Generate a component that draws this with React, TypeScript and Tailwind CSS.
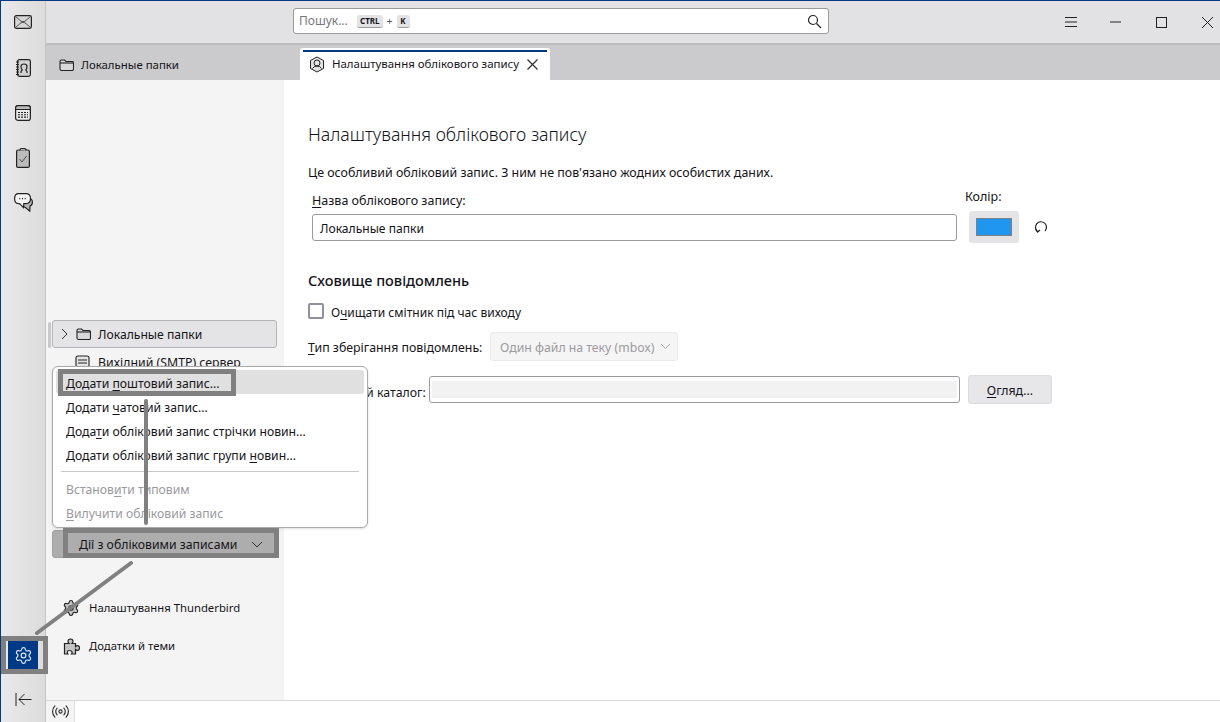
import React from 'react';
import { Settings, Radio } from 'lucide-react';

const Mail = () => (
  <svg width="18" height="14" viewBox="0 0 18 14" fill="#d6d6d6" stroke="#222" strokeWidth="1.2">
    <rect x=".6" y=".6" width="16.800" height="12.800" rx="1.800" />
    <path d="M1.500 1.500l5.500 4.700q2 1 4 0l5.500-4.700M1.500 12.500L7 7.800q2-1 4 0l5.500 4.700" fill="none" strokeWidth=".9" stroke="#444" />
  </svg>
);

const Book = () => (
  <svg width="15" height="18" viewBox="0 0 15 18" fill="#d2d2d2" stroke="#222" strokeWidth="1.200">
    <rect x="1.600" y=".6" width="12.800" height="16.800" rx="1.800" />
    <path d="M0 3h3M0 5.500h3M0 8h3M0 10.500h3M0 13h3M0 15.500h3" strokeWidth="1" />
    <path d="M5 14v-1.500l1.200-1.500Q5 9.500 5 7.500 5 5 8 5t3 2.500q0 2-1.200 3.500l1.200 1.500V14" fill="none" />
  </svg>
);

const Calendar = () => (
  <svg width="16" height="16" viewBox="0 0 16 16" fill="#e9e9e9" stroke="#222" strokeWidth="1.200">
    <rect x=".6" y=".6" width="14.800" height="14.800" rx="2.500" />
    <path d="M.6 4.500V3q0-2.400 2.400-2.400h10q2.400 0 2.400 2.400v1.500z" fill="#bdbdbd" />
    <path d="M3 7.500h10M3 9.800h10M3 12.100h10" strokeDasharray="2 1" strokeWidth="1.100" />
  </svg>
);

const Tasks = () => (
  <svg width="14" height="20" viewBox="0 0 14 20" fill="#bcbcbc" stroke="#222" strokeWidth="1.200">
    <rect x=".6" y="2" width="12.800" height="17.400" rx="1.500" />
    <path d="M4 2.200Q4 .6 5.500 .6h3Q10 .6 10 2.200" fill="#e4e4e4" />
    <path d="M3.500 11l2.500 3 4.500-6" fill="none" strokeWidth=".9" stroke="#444" />
  </svg>
);

const Chat = () => (
  <svg width="19" height="19" viewBox="0 0 19 19" fill="none" stroke="#222" strokeWidth="1.200">
    <path d="M15 5q3.400 .8 3.400 4.200 0 3-2.400 3.800l-.2 5.200-4.300-3.700-2.500-1" fill="#b8b8b8" />
    <path d="M4.500.6h7.500q4.500 0 4.500 5t-4.500 5H9.800l-.3 4-4-4h-1Q.6 10.600.6 5.600T4.500.6z" fill="#f4f4f4" />
    <path d="M5.300 5.600h1M8 5.600h1M10.700 5.600h1" />
  </svg>
);

const Folder = () => (
  <svg width="15" height="12" viewBox="0 0 15 12" fill="#d8d8da" stroke="#222" strokeWidth="1.100">
    <path d="M1 2.500q0-1.500 1.500-1.500h3l1.500 1.500h6q1.500 0 1.500 1.500v6q0 1.500-1.500 1.500h-10Q1 11.500 1 10z" />
    <path d="M1 4h13" />
  </svg>
);

const AddonPiece = () => (
  <svg width="17" height="17" viewBox="0 0 17 17" fill="#c4c4c4" stroke="#222" strokeWidth="1.200">
    <path d="M1.500 5.500H6Q5 4.500 5 3.300 5 1 7.500 1T10 3.300q0 1.200-1 2.200h3.500v3q.8-.8 2-.8 2 0 2 2.300t-2 2.300q-1.200 0-2-.8V16H8.500q.8-1 .5-2-.5-1.500-2.500-1.500T4.300 14q-.1 1 .7 2H1.500z" />
  </svg>
);

const Mnemonic = ({ children }: { children: React.ReactNode }) => (
  <span className="underline underline-offset-2 decoration-1">{children}</span>
);

const rail = [
  { Icon: Mail, h: 'h-[44px]' },
  { Icon: Book, h: 'h-[46px]' },
  { Icon: Calendar, h: 'h-[43px]' },
  { Icon: Tasks, h: 'h-[45px]' },
  { Icon: Chat, h: 'h-[45px]' },
];

const menuClass = 'h-6 pl-[10px] pt-[4px] flex items-center text-[12.200px] whitespace-pre';

export default function App() {
  return (
    <div className="relative h-[722px] w-[1220px] overflow-hidden flex bg-white border-t border-l border-[#003a87] text-[12.400px] text-[#15141a] [font-family:'Noto_Sans',sans-serif]">
      {/* Spaces toolbar */}
      <aside className="w-[45px] shrink-0 flex flex-col items-center bg-gradient-to-r from-[#e9e9e9] to-[#dcdcdc] border-r border-[#c4c4c4]">
        <div className="pt-[14px] flex flex-col items-center w-full">
          {rail.map(({ Icon, h }, i) => (
            <div key={i} className={`${h} w-full flex items-start justify-center`}>
              <Icon />
            </div>
          ))}
        </div>
        <div className="mt-auto w-[30px] h-[28px] mb-[24px] bg-[#003a87] flex items-center justify-center">
          <Settings size={19} strokeWidth={1.500} color="#dbe6f5" />
        </div>
        <div className="h-[13px] mb-[16px] flex items-center">
          <svg width="17" height="13" viewBox="0 0 17 13" fill="none" stroke="#222" strokeWidth="1">
            <path d="M1 0v13M16.500 6.500H4M9.500 1L4 6.500 9.500 12" />
          </svg>
        </div>
      </aside>

      <div className="flex-1 min-w-0 flex flex-col">
        {/* Title bar */}
        <header className="h-[42px] shrink-0 flex items-center bg-[#e2e2e5] pl-[247px]">
          <div className="w-[536px] h-[26px] mb-[2px] flex items-center bg-white border border-[#9a9a9e] rounded-[3px] pl-[5px] pr-[6px]">
            <span className="text-[#77767c] text-[12px]">Пошук...</span>
            <span className="ml-[9px] h-[13px] w-[26px] rounded-[3px] bg-[#e3e3e5] border-b border-[#999] flex items-center justify-center text-[8px] font-bold">CTRL</span>
            <span className="mx-[4px] text-[10px] text-[#555]">+</span>
            <span className="h-[13px] w-[13px] rounded-[3px] bg-[#e3e3e5] border-b border-[#999] flex items-center justify-center text-[8px] font-bold">K</span>
            <svg className="ml-auto" width="15" height="15" viewBox="0 0 15 15" fill="none" stroke="#222" strokeWidth="1.200">
              <circle cx="6" cy="6" r="4.500" />
              <path d="M9.500 9.500L14 14" />
            </svg>
          </div>
          <div className="ml-auto flex items-center">
            <svg width="12" height="10" viewBox="0 0 12 10" stroke="#222" strokeWidth="1"><path d="M0 .5h12M0 5h12M0 9.500h12" /></svg>
            <svg className="ml-[33px]" width="11" height="2" viewBox="0 0 11 2" stroke="#222" strokeWidth="1"><path d="M0 1h11" /></svg>
            <svg className="ml-[35px]" width="11" height="11" viewBox="0 0 11 11" fill="none" stroke="#222" strokeWidth="1"><rect x=".5" y=".5" width="10" height="10" /></svg>
            <svg className="ml-[35px] mr-[7px]" width="11" height="11" viewBox="0 0 11 11" stroke="#222" strokeWidth="1"><path d="M0 0l11 11M11 0L0 11" /></svg>
          </div>
        </header>

        {/* Tabs */}
        <div className="h-[37px] shrink-0 flex items-end bg-[#cbcbcd] border-t-2 border-t-[#bdbdbf]">
          <div className="w-[254px] h-full flex items-center pl-[13px] gap-[7px] pt-[5px] text-[11.400px]">
            <Folder />
            <span>Локальные папки</span>
          </div>
          <div className="w-[250px] h-[32px] bg-white rounded-t-[3px] pt-[2px] px-[3px]">
            <div className="h-[2px] bg-[#003a87]" />
            <div className="h-[24px] flex items-center pl-[6px] gap-[7px] text-[11.450px] whitespace-nowrap">
              <svg width="16" height="17" viewBox="0 0 16 17" fill="none" stroke="#222" strokeWidth="1">
                <path d="M8 1l6.500 3.500v8L8 16l-6.500-3.500v-8z" fill="#e4e4e4" />
                <circle cx="8" cy="7" r="3" />
                <path d="M3.500 12.500Q5 10 8 10t4.500 2.500" />
              </svg>
              <span>Налаштування облікового запису</span>
              <svg className="ml-[1px]" width="11" height="11" viewBox="0 0 11 11" stroke="#333" strokeWidth="1.300"><path d="M.5.500l10 10M10.500.500l-10 10" /></svg>
            </div>
          </div>
        </div>

        <div className="flex-1 min-h-0 flex">
          {/* Account tree */}
          <nav className="w-[238px] shrink-0 bg-[#f4f4f4] flex flex-col pl-[6px] pr-[7px]">
            <div className="mt-[240px] h-[28px] flex items-center rounded-[3px] border border-[#b4b4b6] bg-[#e4e4e6] pl-[8px] gap-[7px] text-[12.150px]">
              <svg width="8" height="12" viewBox="0 0 8 12" fill="none" stroke="#333" strokeWidth="1"><path d="M1 1l5 5-5 5" /></svg>
              <Folder />
              <span className="pt-[3px]">Локальные папки</span>
            </div>
            <div className="h-[28px] flex items-center pl-[23px] gap-[8px] text-[12.300px]">
              <svg width="15" height="15" viewBox="0 0 15 15" fill="#e4e4e4" stroke="#222" strokeWidth="1.100">
                <rect x="1" y="1" width="13" height="13" rx="2" />
                <path d="M3 5h9M3 8h9" />
              </svg>
              <span className="pt-[3px]">Вихідний (SMTP) сервер</span>
            </div>
            <div className="mt-[154px] h-[28px] rounded-[3px] bg-[#adadad] border border-[#a0a0a0] flex items-center pl-[26px] text-[12.250px]">
              <span className="pt-[2px]">Дії з обліковими записами</span>
              <svg className="ml-[14px]" width="12" height="7" viewBox="0 0 12 7" fill="none" stroke="#333" strokeWidth="1"><path d="M1 1l5 5 5-5" /></svg>
            </div>
            <div className="mt-[40px] flex items-center gap-[9px] pl-[10px] h-[20px] text-[11.300px]">
              <Settings size={18} strokeWidth={1.500} fill="#c4c4c4" color="#222" />
              <span>Налаштування Thunderbird</span>
            </div>
            <div className="mt-[18px] flex items-center gap-[9px] pl-[11px] h-[20px] text-[11.300px]">
              <AddonPiece />
              <span>Додатки й теми</span>
            </div>
          </nav>

          {/* Account settings */}
          <main className="flex-1 min-w-0 pl-[24px] pt-[41px]">
            <h1 className="text-[17.700px] font-light leading-[26px]">Налаштування облікового запису</h1>
            <p className="mt-[17px] leading-[18px]">Це особливий обліковий запис. З ним не пов'язано жодних особистих даних.</p>
            <div className="flex items-end mt-[6px]">
              <div className="w-[645px] ml-[4px]">
                <label className="block leading-[18px] mb-[4px] text-[12.500px]"><Mnemonic>Н</Mnemonic>азва облікового запису:</label>
                <div className="h-[27px] border border-[#9a9a9e] rounded-[3px] flex items-center pl-[7px] pt-[4px] text-[12.100px]">Локальные папки</div>
              </div>
              <div className="ml-[8px] -mb-[2px]">
                <div className="leading-[18px] mb-[5px] text-[12.500px]">Колір:</div>
                <div className="flex items-center">
                  <div className="ml-[4px] h-[32px] w-[50px] bg-[#e4e4e6] rounded-[3px] flex items-center justify-center">
                    <div className="w-[36px] h-[18px] bg-[#2196f0] border border-[#808080]" />
                  </div>
                  <svg className="ml-[15px]" width="14" height="14" viewBox="0 0 14 14" fill="none" stroke="#222" strokeWidth="1.200">
                    <path d="M3.500 11.500A5.500 5.500 0 1 1 11 11" />
                    <path d="M1.500 9l2 3 2.500-2" />
                  </svg>
                </div>
              </div>
            </div>
            <h2 className="mt-[28px] text-[14.500px] font-medium leading-[22px]">Сховище повідомлень</h2>
            <label className="mt-[11px] flex items-center h-[18px]">
              <span className="w-[16px] h-[16px] rounded-[2px] border-2 border-[#8f8f9d] bg-white" />
              <span className="ml-[7px] text-[12.050px] pt-[4px]">О<Mnemonic>ч</Mnemonic>ищати смітник під час виходу</span>
            </label>
            <div className="mt-[11px] flex items-center h-[30px]">
              <span className="w-[182px] text-[12.350px] pt-[4px] whitespace-nowrap"><Mnemonic>Т</Mnemonic>ип зберігання повідомлень:</span>
              <div className="w-[188px] h-[29px] rounded-[3px] bg-[#f5f5f5] border border-[#ececec] text-[#9b9b9f] flex items-center pl-[9px] text-[12.250px]">
                <span className="pt-[4px]">Один файл на теку (mbox)</span>
                <svg className="ml-[5px]" width="11" height="7" viewBox="0 0 11 7" fill="none" stroke="#aaa" strokeWidth="1"><path d="M1 1l4.500 4.500L10 1" /></svg>
              </div>
            </div>
            <div className="mt-[14px] flex items-center">
              <span className="w-[121px] whitespace-nowrap pt-[7px] text-[12.300px]">Локальний каталог:</span>
              <div className="w-[531px] h-[27px] border border-[#9a9a9e] rounded-[3px] px-[2px] py-[4px] bg-white">
                <div className="h-full bg-[#f2f2f2]" />
              </div>
              <button className="ml-[8px] w-[84px] h-[29px] bg-[#e7e7e9] border border-[#dcdcde] rounded-[3px] text-center text-[12.300px] pt-[3px]">
                <Mnemonic>О</Mnemonic>гляд...
              </button>
            </div>
          </main>
        </div>

        {/* Status bar */}
        <footer className="h-[22px] shrink-0 flex bg-white border-t border-[#d8d8d8]">
          <div className="w-[29px] border-r border-[#e0e0e0] bg-[#f4f4f4] flex items-center justify-center">
            <Radio size={19} strokeWidth={1.500} color="#333" />
          </div>
        </footer>
      </div>

      {/* Grip beside the selected account */}
      <div className="absolute left-[47px] top-[321px] w-[3px] h-[26px] rounded-full bg-[#c8c8c8]" />

      {/* Account actions popup */}
      <div className="absolute left-[51px] top-[365px] w-[316px] h-[162px] bg-white border border-[#a9a9ab] rounded-[6px] p-[3px] shadow-sm">
        <div className={`${menuClass} bg-[#e0e0e0] rounded-[3px]`}><span>Додати <Mnemonic>п</Mnemonic>оштовий запис...</span></div>
        <div className={menuClass}><span>Додати <Mnemonic>ч</Mnemonic>атовий запис...</span></div>
        <div className={menuClass}><span>Дода<Mnemonic>т</Mnemonic>и обліковий запис стрічки новин...</span></div>
        <div className={menuClass}><span>Додати обліковий запис групи <Mnemonic>н</Mnemonic>овин...</span></div>
        <div className="mx-[5px] border-t border-[#c8c8c8] mt-[5px] mb-[4px]" />
        <div className={`${menuClass} text-[#9a9a9e]`}><span>Встанов<Mnemonic>и</Mnemonic>ти типовим</span></div>
        <div className={`${menuClass} text-[#9a9a9e]`}><span><Mnemonic>В</Mnemonic>илучити обліковий запис</span></div>
      </div>

      {/* Tutorial annotations drawn over the screenshot */}
      <div className="absolute left-[57px] top-[368px] w-[178px] h-[27px] border-[5px] border-[#808080]" />
      <div className="absolute left-[62px] top-[527px] w-[216px] h-[30px] border-[5px] border-[#808080]" />
      <div className="absolute left-0 top-[635px] w-[47px] h-[38px] border-[5px] border-[#808080]" />
      <svg className="absolute left-0 top-0 pointer-events-none" width="1220" height="722" stroke="#808080" strokeWidth="4" strokeLinecap="round">
        <path d="M145 400v122M130 562L36 632" />
      </svg>
    </div>
  );
}
